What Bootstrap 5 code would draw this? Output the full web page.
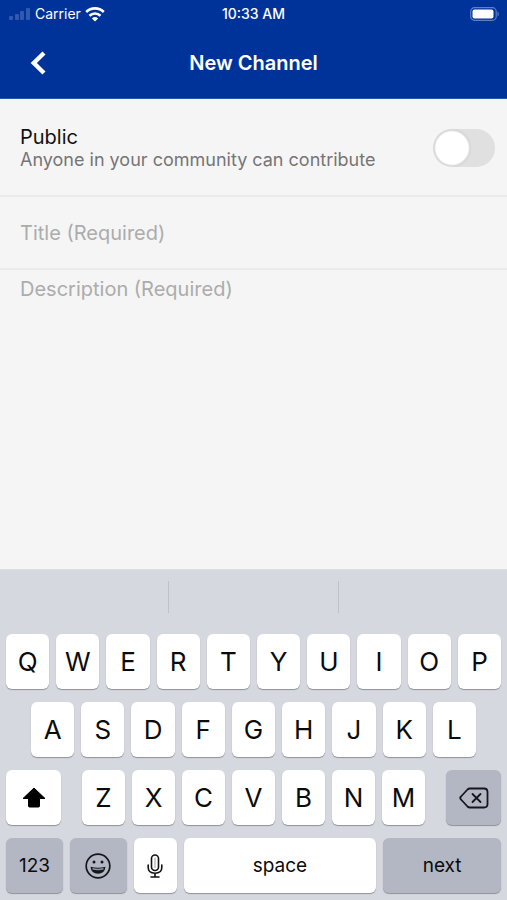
<!DOCTYPE html>
<html lang="en">
<head>
<meta charset="utf-8">
<meta name="viewport" content="width=device-width, initial-scale=1">
<title>New Channel</title>
<link href="https://cdn.jsdelivr.net/npm/bootstrap@5.3.0/dist/css/bootstrap.min.css" rel="stylesheet">
<style>
  body { font-family: Inter, "Liberation Sans", sans-serif; background: #f5f5f5; color: #111; }
  .app-top { background: #003399; color: #fff; }
  .status { height: 28px; padding: 0 8px; font-size: 14px; line-height: 20px; }
  .status-time { font-weight: 500; }
  .title-bar { height: 70px; padding: 0 20px; border-bottom: 1px solid #2a55a9; box-sizing: content-box; }
  .title-bar h1 { font-size: 20px; line-height: 28px; font-weight: 600; }
  .side { flex: 1 1 0; }
  .back { width: 36px; height: 40px; color: #fff; }
  .setting { height: 98px; padding: 2px 12px 0 20px; border-bottom: 2px solid #ebebeb; }
  .setting-name { font-size: 20px; line-height: 24px; }
  .setting-note { font-size: 18px; line-height: 22px; color: #757575; }
  .form-switch .toggle { width: 62px; height: 38px; margin: 0; border: 0; background-color: #e0e0e0; border-radius: 19px;
    background-image: radial-gradient(circle at 19px 19px, #fff 16px, #d6d6d6 18px, transparent 20px); background-position: left center; background-size: 100% 100%; }
  .field { font-size: 20px; line-height: 24px; padding: 0 20px; border: 0; border-radius: 0; background: transparent; }
  .field:focus { background: transparent; box-shadow: none; }
  .field::placeholder { color: #acacac; }
  .field-title { height: 73px; border-bottom: 2px solid #ebebeb; }
  .field-text { padding-top: 7px; resize: none; }
  .keyboard { background: #d6d8df; padding: 0 6px 7px; border-top: 1px solid #dcdde1; }
  .suggest { height: 64px; padding: 11px 0 21px; margin: 0 -6px; }
  .suggest > div { flex: 1 1 0; }
  .suggest > div + div { border-left: 1px solid #bfc1c7; }
  .key-rows { gap: 13px; }
  .key-row { gap: 7px; }
  .key-row.inset { padding: 0 25px; }
  .letters { flex: 343 1 0; gap: 7px; margin: 0 14px; }
  .key { flex: 43 1 0; min-width: 0; height: 55px; padding: 0; border: 0; border-radius: 6px; background: #fff; color: #0b0b0b;
    box-shadow: 0 1px 1px #8f9198; font-size: 26px; line-height: 32px; display: flex; align-items: center; justify-content: center; }
  .key.grey { background: #b3b7c3; }
  .key.word { font-size: 19px; line-height: 24px; }
  .w-mod { flex-grow: 55; }
  .w-fn { flex-grow: 57; }
  .w-space { flex-grow: 193; }
  .w-next { flex-grow: 118; }
</style>
</head>
<body>
<div class="d-flex flex-column min-vh-100">
  <header class="app-top">
    <div class="status d-flex align-items-center">
      <div class="side d-flex align-items-center gap-1">
        <svg width="23" height="14" viewBox="0 0 23 14" fill="#3159ad" aria-hidden="true"><rect x="1" y="9" width="4" height="4" rx="1"/><rect x="7" y="7" width="4" height="6" rx="1"/><rect x="12" y="4" width="4" height="9" rx="1"/><rect x="18" y="1" width="4" height="12" rx="1"/></svg>
        <span>Carrier</span>
        <svg width="20" height="15" viewBox="0 0 20 15" fill="none" stroke="#fff" stroke-width="2.6" aria-hidden="true"><path d="M1.200 5a12.600 12.600 0 0 1 17.600 0M4.500 8.700a7.900 7.900 0 0 1 11 0"/><path d="M10 14.500 6.900 11.500a4.500 4.500 0 0 1 6.200 0z" fill="#fff" stroke="none"/></svg>
      </div>
      <div class="status-time">10:33 AM</div>
      <div class="side d-flex justify-content-end">
        <svg width="30" height="14" viewBox="0 0 30 14" aria-hidden="true"><rect x="1.700" y=".7" width="25.500" height="12.600" rx="3.800" fill="none" stroke="#6080bf" stroke-width="1.200"/><rect x="3.500" y="2.500" width="21" height="9" rx="2" fill="#fff"/><path d="M28.500 4.500a3 3 0 0 1 0 5z" fill="#6080bf"/></svg>
      </div>
    </div>
    <div class="title-bar d-flex align-items-center">
      <div class="side">
        <button type="button" class="back btn p-0 border-0 d-flex align-items-center justify-content-center" aria-label="Back">
          <svg width="16" height="24" viewBox="0 0 16 24" fill="none" stroke="currentColor" stroke-width="4.400"><path d="M14 2 3.800 12 14 22"/></svg>
        </button>
      </div>
      <h1 class="m-0">New Channel</h1>
      <div class="side"></div>
    </div>
  </header>

  <main class="flex-grow-1 d-flex flex-column">
    <div class="setting d-flex align-items-center justify-content-between">
      <label for="public">
        <span class="setting-name d-block">Public</span>
        <span class="setting-note d-block">Anyone in your community can contribute</span>
      </label>
      <div class="form-check form-switch p-0 m-0 lh-1">
        <input class="form-check-input toggle float-none d-block" type="checkbox" role="switch" id="public">
      </div>
    </div>
    <input type="text" class="form-control field field-title" placeholder="Title (Required)" aria-label="Title">
    <textarea class="form-control field field-text flex-grow-1" placeholder="Description (Required)" aria-label="Description"></textarea>
  </main>

  <section class="keyboard" aria-label="Keyboard">
    <div class="suggest d-flex"><div></div><div></div><div></div></div>
    <div class="key-rows d-flex flex-column">
      <div class="key-row d-flex">
        <button type="button" class="key">Q</button><button type="button" class="key">W</button><button type="button" class="key">E</button><button type="button" class="key">R</button><button type="button" class="key">T</button><button type="button" class="key">Y</button><button type="button" class="key">U</button><button type="button" class="key">I</button><button type="button" class="key">O</button><button type="button" class="key">P</button>
      </div>
      <div class="key-row inset d-flex">
        <button type="button" class="key">A</button><button type="button" class="key">S</button><button type="button" class="key">D</button><button type="button" class="key">F</button><button type="button" class="key">G</button><button type="button" class="key">H</button><button type="button" class="key">J</button><button type="button" class="key">K</button><button type="button" class="key">L</button>
      </div>
      <div class="key-row d-flex">
        <button type="button" class="key w-mod" aria-label="Shift"><svg width="24" height="21" viewBox="0 0 24 21" fill="#000" stroke="#000" stroke-linejoin="round"><path d="M12 1 23 11.500h-5.500V19q0 1-1 1h-9q-1 0-1-1v-7.500H1z"/></svg></button>
        <div class="letters d-flex">
          <button type="button" class="key">Z</button><button type="button" class="key">X</button><button type="button" class="key">C</button><button type="button" class="key">V</button><button type="button" class="key">B</button><button type="button" class="key">N</button><button type="button" class="key">M</button>
        </div>
        <button type="button" class="key grey w-mod" aria-label="Delete"><svg width="30" height="22" viewBox="0 0 30 22" fill="none" stroke="#15171c" stroke-width="1.800" stroke-linecap="round" stroke-linejoin="round"><path d="M11 1.500h14q3.500 0 3.500 3.500v12q0 3.500-3.500 3.500H11q-1.500 0-2.500-1L2 12.500q-1.500-1.500 0-3L8.500 2.500q1-1 2.500-1z"/><path d="m13.500 7 8 8m0-8-8 8"/></svg></button>
      </div>
      <div class="key-row d-flex">
        <button type="button" class="key grey word w-fn">123</button>
        <button type="button" class="key grey w-fn" aria-label="Emoji"><svg width="26" height="26" viewBox="0 0 26 26" fill="none" stroke="#15171c" stroke-width="1.700"><circle cx="13" cy="13" r="11.800"/><circle cx="9" cy="9" r="1.500" fill="#15171c" stroke="none"/><circle cx="17" cy="9" r="1.500" fill="#15171c" stroke="none"/><path d="M5.500 13.800q7.500 1.800 15 0-.8 7-7.500 7t-7.500-7z" fill="#15171c" stroke="none"/><path d="M7.500 15.800q5.500 1.200 11 0" stroke="#9296a2" stroke-width="1.500"/></svg></button>
        <button type="button" class="key" aria-label="Dictate"><svg width="16" height="24" viewBox="0 0 16 24" fill="none" stroke="#111" stroke-width="1.600" stroke-linecap="round"><rect x="4.500" y="1" width="7" height="15.500" rx="3.500"/><path d="M1.200 11v2.500q0 5.700 6.800 5.700t6.800-5.700V11M8 19.500V23M4 23h8"/><path d="M8 4v9.500" stroke="#999" stroke-width="1"/></svg></button>
        <button type="button" class="key word w-space">space</button>
        <button type="button" class="key grey word w-next">next</button>
      </div>
    </div>
  </section>
</div>
<script src="https://cdn.jsdelivr.net/npm/bootstrap@5.3.0/dist/js/bootstrap.bundle.min.js"></script>
</body>
</html>
